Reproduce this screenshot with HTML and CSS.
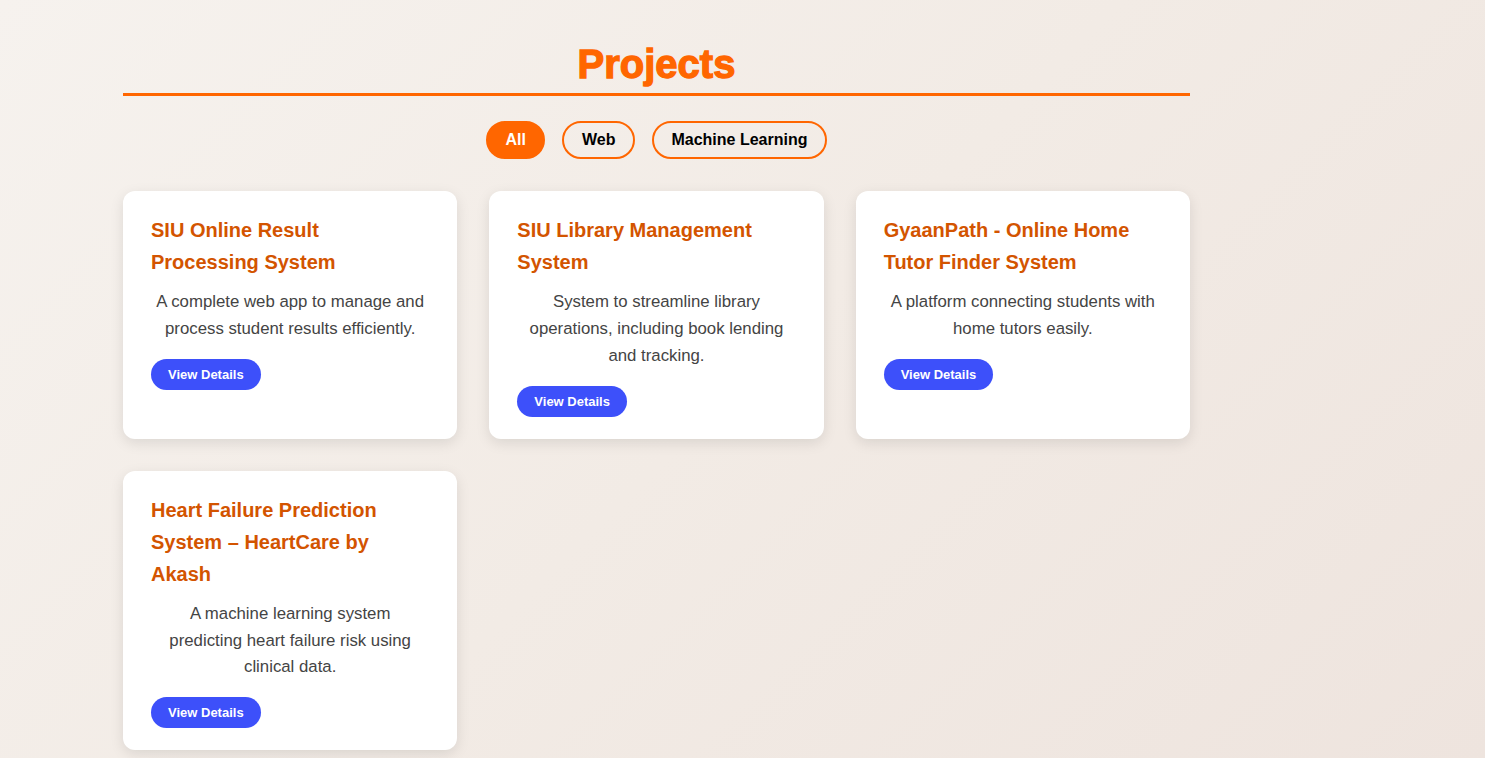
FILE: index.html
```html
<!DOCTYPE html>
<html lang="en">
<head>
<meta charset="utf-8">
<title>Projects</title>
<link rel="stylesheet" href="styles.css">
</head>
<body>
<main class="projects">
  <h2 class="projects-title">Projects</h2>
  <div class="filters">
    <button class="filter active">All</button>
    <button class="filter">Web</button>
    <button class="filter">Machine Learning</button>
  </div>
  <div class="grid">
    <article class="card">
      <h3 class="card-title">SIU Online Result Processing System</h3>
      <p class="card-desc">A complete web app to manage and process student results efficiently.</p>
      <button class="details">View Details</button>
    </article>
    <article class="card">
      <h3 class="card-title">SIU Library Management System</h3>
      <p class="card-desc">System to streamline library operations, including book lending and tracking.</p>
      <button class="details">View Details</button>
    </article>
    <article class="card">
      <h3 class="card-title">GyaanPath - Online Home Tutor Finder System</h3>
      <p class="card-desc">A platform connecting students with home tutors easily.</p>
      <button class="details">View Details</button>
    </article>
    <article class="card">
      <h3 class="card-title">Heart Failure Prediction System – HeartCare by Akash</h3>
      <p class="card-desc">A machine learning system predicting heart failure risk using clinical data.</p>
      <button class="details">View Details</button>
    </article>
  </div>
</main>
</body>
</html>
```

FILE: styles.css
```css
* { box-sizing: border-box; }

html, body {
  margin: 0;
  min-height: 100%;
}

body {
  font-family: "Liberation Sans", Arial, sans-serif;
  font-size: 16px;
  line-height: 1.6;
  color: #333;
  background: linear-gradient(135deg, #f6f2ee 0%, #f2ebe5 50%, #eee4de 100%);
  min-height: 758px;
}

.projects {
  width: 1067px;
  margin-left: 123px;
  padding-top: 40px;
}

.projects-title {
  margin: 0;
  font-size: 40px;
  line-height: 48px;
  font-weight: 700;
  color: #ff6600;
  -webkit-text-stroke: 1.3px #ff6600;
  text-align: center;
  padding-bottom: 5px;
  border-bottom: 3px solid #ff6600;
}

.filters {
  display: flex;
  justify-content: center;
  gap: 17px;
  margin-top: 25px;
}

.filter {
  font-family: "Liberation Sans", Arial, sans-serif;
  font-size: 16px;
  font-weight: 700;
  line-height: normal;
  color: #000;
  background: transparent;
  border: 2px solid #ff6600;
  border-radius: 20px;
  padding: 8px 17.5px;
  cursor: pointer;
}

.filter.active {
  background: #ff6600;
  color: #fff;
}

.grid {
  display: grid;
  grid-template-columns: repeat(3, 1fr);
  column-gap: 32px;
  row-gap: 32px;
  margin-top: 32px;
}

.card {
  background: #fff;
  border-radius: 12px;
  padding: 23px 28px 22px;
  box-shadow: 0 4px 14px rgba(0, 0, 0, 0.1);
}

.card-title {
  margin: 0 0 11px;
  font-size: 20px;
  line-height: 32px;
  font-weight: 700;
  color: #d35400;
}

.card-desc {
  margin: 0 0 16px;
  padding: 0 3px;
  font-size: 16.8px;
  line-height: 1.6;
  color: #444;
  text-align: center;
}

.details {
  font-family: "Liberation Sans", Arial, sans-serif;
  font-size: 13px;
  font-weight: 700;
  line-height: normal;
  color: #fff;
  background: #3d50fa;
  border: none;
  border-radius: 20px;
  padding: 8px 17px;
  cursor: pointer;
}
```
